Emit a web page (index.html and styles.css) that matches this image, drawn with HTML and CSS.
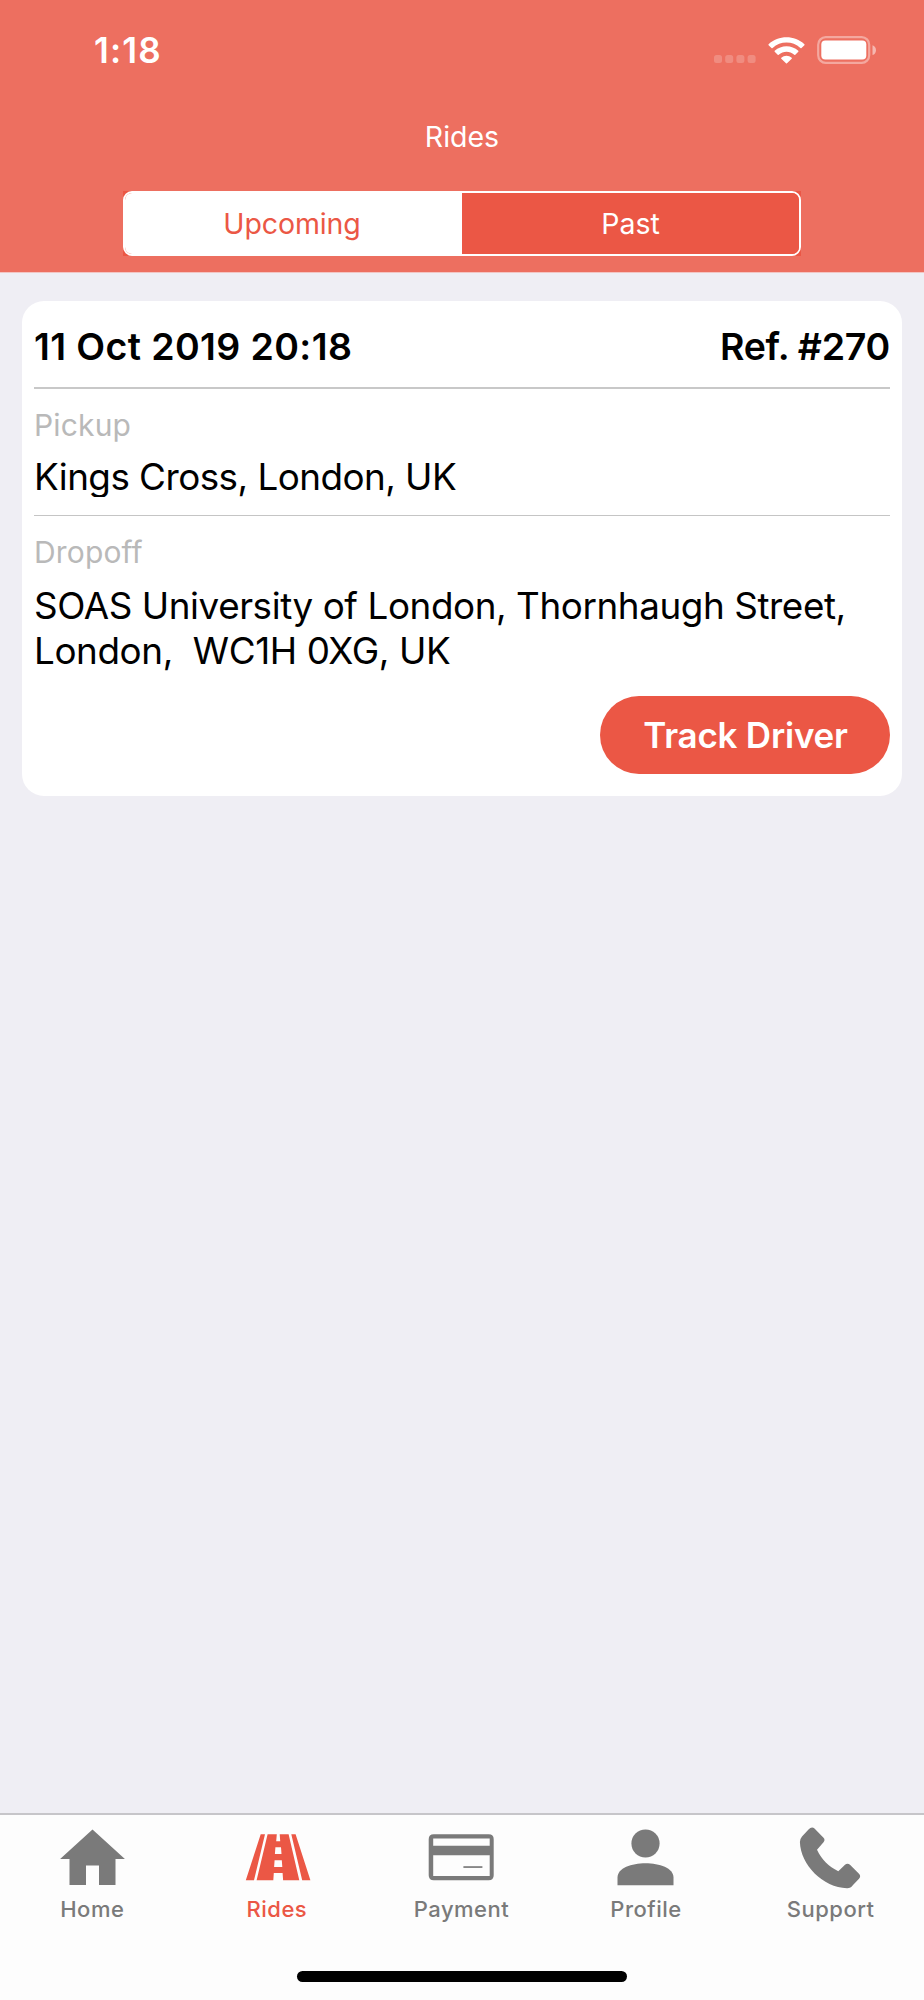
FILE: index.html
```html
<!DOCTYPE html>
<html lang="en">
<head>
<meta charset="utf-8">
<title>Rides</title>
<link rel="stylesheet" href="styles.css">
</head>
<body>
<div class="app">
  <header class="header">
    <div class="status">
      <span class="time">1:18</span>
      <div class="indicators">
        <svg class="dots" viewBox="0 0 42 8"><rect x="0" width="8" height="8" rx="2.5"/><rect x="11.2" width="8" height="8" rx="2.5"/><rect x="22.4" width="8" height="8" rx="2.5"/><rect x="33.6" width="8" height="8" rx="2.5"/></svg>
        <svg class="wifi" viewBox="0 0 37 27"><path d="M.6 7.2C10.300-2 26.700-2 36.400 7.200Q36.900 7.800 36.400 8.300L33.500 11.100Q33 11.500 32.400 11C24.500 3.700 12.500 3.700 4.600 11Q4 11.500 3.500 11.100L.6 8.300Q.1 7.800.6 7.200ZM6.700 13.800C13.300 7.700 23.700 7.700 30.300 13.800Q30.700 14.300 30.300 14.800L27.300 17.800Q26.800 18.200 26.300 17.800C21.700 13.800 15.300 13.800 10.700 17.800Q10.200 18.200 9.700 17.800L6.700 14.800Q6.300 14.300 6.700 13.800ZM13.300 20.700C16.200 18 20.800 18 23.700 20.700Q24.200 21.200 23.700 21.700L19 26.300Q18.500 26.700 18 26.300L13.300 21.700Q12.800 21.200 13.300 20.700Z"/></svg>
        <svg class="battery" viewBox="0 0 60 28"><rect class="shell" x="1.200" y="1.200" width="51" height="25.600" rx="7.500"/><rect class="charge" x="4.300" y="4.500" width="45" height="19" rx="4"/><path class="cap" d="M55.500 9.300C57.800 10 59 12 59 14.200S57.800 18.400 55.500 19.100Z"/></svg>
      </div>
    </div>
    <h1 class="title">Rides</h1>
    <div class="segmented-wrap">
      <nav class="segmented">
        <button class="segment selected">Upcoming</button>
        <button class="segment">Past</button>
      </nav>
    </div>
  </header>

  <main class="content">
    <article class="card">
      <div class="card-head"><span class="date">11 Oct 2019 20:18</span><span class="ref">Ref. #270</span></div>
      <section class="stop pickup">
        <div class="label">Pickup</div>
        <div class="address single">Kings Cross, London, UK</div>
      </section>
      <section class="stop dropoff">
        <div class="label">Dropoff</div>
        <div class="address">SOAS University of London, Thornhaugh Street,<br><span class="postcode">London, &nbsp;WC1H 0XG, UK</span></div>
      </section>
      <button class="track">Track Driver</button>
    </article>
  </main>

  <footer class="tabbar">
    <nav class="tabs">
      <a class="tab"><svg class="icon" viewBox="0 0 70 64"><path d="M35.500 7.500L67.900 37H58.500V63H42V43.500H29V63H12.500V37H3.100Z"/></svg><span>Home</span></a>
      <a class="tab active"><svg class="icon" viewBox="-.5 .5 70 64"><path d="M18.200 12.700H22.500L11.500 58.700H3.300ZM48.800 12.700H53.100L67.900 58.700H59.700ZM25.100 12.700H34.300L33.700 19.700H37.700L37.200 12.700H46.100L56.800 58.700H40.600L40.100 51.500H31.300L30.800 58.700H14.100ZM32.900 25.700L32.400 32.600H39L38.500 25.700ZM32.100 38.700L31.600 45.600H39.800L39.300 38.700Z" fill-rule="evenodd"/></svg><span>Rides</span></a>
      <a class="tab"><svg class="icon" viewBox="-.7 .5 70 64"><path fill-rule="evenodd" d="M7 12.700H62Q67 12.700 67 17.700V53.700Q67 58.700 62 58.700H7Q2 58.700 2 53.700V17.700Q2 12.700 7 12.700ZM6.500 17V24.200H63V17ZM6.500 33.800V54.500H63V33.800Z"/><rect x="36.700" y="44.700" width="19" height="1.700"/></svg><span>Payment</span></a>
      <a class="tab"><svg class="icon" viewBox="0 .5 70 64"><circle cx="34.500" cy="22" r="14.100"/><path d="M6.500 63.700V56C6.500 36.900 62.500 36.900 62.500 56V63.700Z"/></svg><span>Profile</span></a>
      <a class="tab"><svg class="icon" viewBox="-2 0 70 64"><path d="M10.500 7.500Q13.700 4 16.500 6.500L25.500 15.700Q27.500 17.800 25.500 20.200L19 27.800C24 38 30.500 44.500 40.300 49.200L47 42.800Q49.500 40.700 52 42.800L61 51.800Q63.300 54.200 61 56.800L55 63Q52.700 66.300 49 66.200C25 65.500 2.500 43 1.900 20Q1.900 17 4 14.500Z"/></svg><span>Support</span></a>
    </nav>
    <div class="home-indicator"></div>
  </footer>
</div>
</body>
</html>
```
FILE: styles.css
```css
* { box-sizing: border-box; }
body { margin: 0; }
button { border: 0; padding: 0; font: inherit; color: inherit; }
svg { display: block; overflow: visible; }

.app {
  width: 924px;
  height: 2000px;
  display: flex;
  flex-direction: column;
  background: #efeef4;
  color: #000;
  font-family: Inter, "Liberation Sans", sans-serif;
  white-space: nowrap;
}

.header {
  height: 273px;
  background: #ed6f60;
  border-bottom: 1px solid #f3c5c3;
  color: #fff;
}
.status {
  height: 100px;
  padding: 0 47px 0 94px;
  display: flex;
  align-items: center;
  justify-content: space-between;
}
.time { font-size: 35px; font-weight: 600; letter-spacing: 1.200px; }
.indicators { display: flex; align-items: center; fill: #fff; }
.dots { width: 42px; height: 8px; margin: 18px 12px 0 0; opacity: .2; }
.wifi { width: 37px; height: 27px; margin-right: 12px; }
.battery { width: 60px; height: 28px; }
.shell { fill: none; stroke: #fff; stroke-width: 2.200; opacity: .4; }
.cap { opacity: .5; }

.title {
  margin: 17px 0 34px;
  font-size: 28.500px;
  font-weight: 400;
  line-height: 40px;
  text-align: center;
}
.segmented-wrap { width: 678px; margin: 0 auto; background: #eb5745; }
.segmented {
  height: 65px;
  display: flex;
  border: 2px solid #fff;
  border-radius: 9px;
  overflow: hidden;
}
.segment {
  width: 50%;
  background: #eb5745;
  font-size: 28.500px;
  color: #fff;
}
.segment.selected {
  padding-right: 3px;
  background: #fff;
  color: #eb5745;
  letter-spacing: -.1px;
}

.content { flex: 1; padding: 28px 22px; }
.card {
  height: 495px;
  padding: 0 12px;
  display: flex;
  flex-direction: column;
  background: #fff;
  border-radius: 22px;
}
.card-head {
  height: 88px;
  padding-top: 5px;
  display: flex;
  align-items: center;
  justify-content: space-between;
  border-bottom: 2px solid #c8c8c8;
  font-size: 37.500px;
  font-weight: 600;
}
.date { letter-spacing: .380px; }
.ref { letter-spacing: -.280px; }
.stop { padding-top: 18px; }
.pickup { height: 127px; border-bottom: 1px solid #c5c5c5; }
.label { font-size: 30px; line-height: 36px; letter-spacing: .150px; color: #b9b9b9; }
.address { margin-top: 13px; font-size: 36.800px; line-height: 45px; letter-spacing: -.410px; }
.single { height: 43px; margin-top: 11px; overflow: hidden; letter-spacing: -.530px; }
.postcode { letter-spacing: -.380px; }
.track {
  align-self: flex-end;
  width: 290px;
  height: 78px;
  margin-top: 22.500px;
  padding: 1px 0 0 1px;
  border-radius: 39px;
  background: #eb5745;
  color: #fff;
  font-size: 35px;
  font-weight: 600;
  letter-spacing: -.220px;
}

.tabbar {
  height: 187px;
  background: #fdfdfd;
  border-top: 2px solid #c6c5c9;
}
.tabs { display: flex; height: 156px; padding-right: 1px; }
.tab {
  flex: 1;
  padding-top: 7px;
  display: flex;
  flex-direction: column;
  align-items: center;
  font-size: 22px;
  font-weight: 500;
  line-height: 28px;
  letter-spacing: .5px;
  color: #7a7a7a;
}
.tab.active { color: #eb5745; }
.icon { width: 70px; height: 64px; margin-bottom: 9px; fill: currentColor; }
.home-indicator { width: 330px; height: 11px; margin: 0 auto; border-radius: 6px; background: #000; }
```
